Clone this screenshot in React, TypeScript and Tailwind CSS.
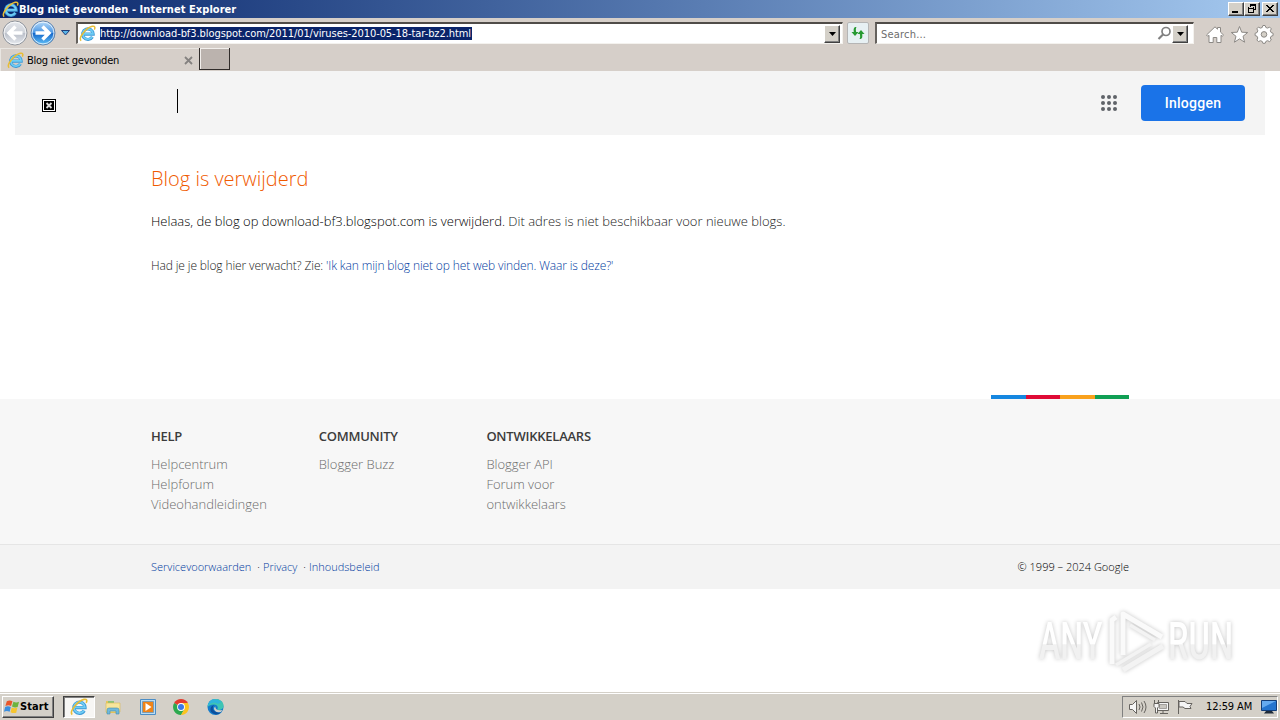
import type { ReactNode } from "react";
import clsx from "clsx";

const TAHOMA = "font-['DejaVu_Sans_Condensed','DejaVu_Sans',sans-serif] [font-stretch:condensed]";
const OPEN_SANS = "font-['Open_Sans',sans-serif]";

function IeIcon({ size = 17 }: { size?: number }) {
  return (
    <svg width={size} height={size} viewBox="0 0 18 18" fill="none" className="shrink-0">
      <path d="M14.200 12.600A5.600 5.600 0 1 1 15 9.600H5" stroke="#3f9ad6" strokeWidth="3.300" />
      <path d="M14 12.400A5.400 5.400 0 1 1 14.800 9.400H5" stroke="#6fcdf5" strokeWidth="1.900" />
      <path d="M2.200 16.600C-1 13.500 7.500 3 14 1.400c3-.6 3.300 1.300 2.200 3.400" stroke="#e8bd35" strokeWidth="1.600" />
    </svg>
  );
}

function NavCircle({ back }: { back?: boolean }) {
  return (
    <svg width="26" height="26" viewBox="0 0 26 26" className="shrink-0">
      <defs>
        <linearGradient id={back ? "nav-back" : "nav-fwd"} x1="0" y1="0" x2="0" y2="1">
          <stop offset="0" stopColor={back ? "#e4e7ec" : "#b9dcfa"} />
          <stop offset="0.48" stopColor={back ? "#cfd3da" : "#4c97e4"} />
          <stop offset="0.5" stopColor={back ? "#b9bec8" : "#1264c8"} />
          <stop offset="1" stopColor={back ? "#e8ebf0" : "#64c4fa"} />
        </linearGradient>
      </defs>
      <circle cx="13" cy="13" r="12" fill={back ? "url(#nav-back)" : "url(#nav-fwd)"} stroke={back ? "#8f949c" : "#6886ab"} />
      <circle cx="13" cy="13" r="10.9" fill="none" stroke="#fff" strokeOpacity="0.75" />
      <path
        d={back ? "M20.500 13H7.500M13.500 6.500L7 13l6.500 6.500" : "M5.500 13h13M12.500 6.500L19 13l-6.500 6.500"}
        fill="none"
        stroke="#fff"
        strokeWidth="3.500"
      />
    </svg>
  );
}

function DropButton() {
  return (
    <div className="flex h-[18px] w-4 shrink-0 items-center justify-center border border-t-white border-r-[#404040] border-b-[#404040] border-l-white bg-[#d4d0c8] shadow-[inset_-1px_-1px_#808080]">
      <svg width="7" height="4" viewBox="0 0 7 4">
        <path d="M0 0h7L3.5 4z" fill="#000" />
      </svg>
    </div>
  );
}

function WindowButton({ children, className }: { children: ReactNode; className?: string }) {
  return (
    <div
      className={clsx(
        "h-[14px] w-4 border border-t-white border-r-[#404040] border-b-[#404040] border-l-white bg-[#d4d0c8] shadow-[inset_-1px_-1px_#808080]",
        className,
      )}
    >
      <svg width="14" height="12" viewBox="0 0 14 12" fill="none" stroke="#000" shapeRendering="crispEdges">
        {children}
      </svg>
    </div>
  );
}

function TitleBar() {
  return (
    <div className="flex h-[18px] items-center bg-linear-to-r from-[#0a246a] to-[#a6caf0] pr-0.5 pl-0.5">
      <IeIcon />
      <span className={`${TAHOMA} mt-px text-[11px] leading-[18px] font-bold tracking-[0.05px] text-white`}>
        Blog niet gevonden - Internet Explorer
      </span>
      <div className="ml-auto flex">
        <WindowButton>
          <path d="M3 9h6" strokeWidth="2" />
        </WindowButton>
        <WindowButton>
          <path d="M5 2h6M5 1.5h6M5.500 1v3M10.500 1v6M8 6.500h3M3 5h6M3.500 4v6M8.500 4v6M3 9.500h6" />
        </WindowButton>
        <WindowButton className="ml-0.5">
          <path d="M3 2l7 7M4 2l7 7M10 2L3 9M11 2L4 9" shapeRendering="auto" />
        </WindowButton>
      </div>
    </div>
  );
}

function AddressRow() {
  return (
    <div className="flex h-[30px] items-center pl-0.5">
      <NavCircle back />
      <div className="ml-0.5">
        <NavCircle />
      </div>
      <svg width="9" height="6" viewBox="0 0 9 6" className="ml-[5px]">
        <path d="M.5.5h8L4.500 5z" fill="#58b4e8" stroke="#1d3c78" />
      </svg>
      <div className="ml-[6px] flex h-[22px] w-[767px] items-center border-t-2 border-r border-b border-l-2 border-t-[#504c48] border-r-[#f4f2ee] border-b-[#f4f2ee] border-l-[#66625e] bg-white pr-[2px] pl-px">
        <IeIcon />
        <span className={`${TAHOMA} ml-1 h-[13px] w-[372px] bg-[#0a246a] text-[11px] leading-[14px] tracking-[-0.07px] whitespace-nowrap text-white`}>
          http://download-bf3.blogspot.com/2011/01/viruses-2010-05-18-tar-bz2.html
        </span>
        <div className="ml-auto">
          <DropButton />
        </div>
      </div>
      <div className="ml-1 flex h-[22px] w-[22px] items-center justify-center rounded-[2px] border border-[#b5b5b5] bg-[#e7f0f3]">
        <svg width="16" height="14" viewBox="0 0 16 14" fill="#279a32">
          <path d="M6.500 1C3.500 1 3.500 3 3.800 6H1.500l3.500 4 3.500-4H6.200c-.5-2-.5-4 .3-5z" />
          <path d="M9.500 13c3 0 3-2 2.700-5h2.300L11 4 7.500 8h2.300c.5 2 .5 4-.3 5z" />
        </svg>
      </div>
      <div className="ml-1.5 flex h-[22px] w-[319px] items-center border-t-2 border-r border-b border-l-2 border-t-[#504c48] border-r-[#f4f2ee] border-b-[#f4f2ee] border-l-[#66625e] bg-white pr-[5px] pl-1">
        <span className={`${TAHOMA} mt-[3px] text-[11px] tracking-[0.2px] text-[#6d6d6d]`}>Search...</span>
        <svg width="15" height="15" viewBox="0 0 15 15" fill="none" stroke="#808080" className="ml-auto">
          <circle cx="9" cy="5.500" r="4" strokeWidth="1.700" />
          <path d="M6 8.500L1.500 13" strokeWidth="2.200" />
        </svg>
        <DropButton />
      </div>
      <svg width="72" height="20" viewBox="0 0 72 20" fill="#fff" stroke="#8c8985" className="mt-1 ml-[11px]">
        <path d="M1.500 10L10 1.800l2.500 2.400V2.500h3v4.600l3 2.900-1.300 1.300L16 10.300V17.500h-4.200v-5h-3.600v5H4v-7.200l-1.200 1z" />
        <path d="M34.500 1.500l2.200 5.700 6 .3-4.700 3.800 1.600 5.900-5.100-3.300-5.100 3.300 1.600-5.900-4.700-3.800 6-.3z" />
        <path d="M57.500 2l.8 2 1.700.6 2-1 1.700 1.700-1 2 .8 1.700 2 .8v2.200l-2 .8-.8 1.700 1 2-1.700 1.600-2-.9-1.700.7-.8 1.900h-2.200l-.7-1.900-1.800-.7-2 .9-1.500-1.600.9-2-.7-1.700-2-.8V9.800l2-.8.7-1.700-.9-2 1.500-1.700 2 1 1.800-.6.7-2z" transform="translate(2.600 -1.500)" />
        <circle cx="59" cy="9.400" r="2.800" fill="#d4d0c8" />
      </svg>
    </div>
  );
}

function TabRow() {
  return (
    <div className="flex h-[23px]">
      <div className="flex h-[23px] w-[199px] items-center border-t border-l border-[#e9e6e2] pr-1.5 pl-1.5">
        <IeIcon />
        <span className={`${TAHOMA} mt-0.5 ml-[3px] text-[11px] tracking-[-0.24px] text-black`}>Blog niet gevonden</span>
        <svg width="9" height="9" viewBox="0 0 9 9" stroke="#858280" strokeWidth="1.800" className="ml-auto">
          <path d="M1 1l7 7M8 1L1 8" />
        </svg>
      </div>
      <div className="h-[22px] w-[31px] border-r border-b border-l border-[#302c2a] bg-[#bbb3ae] shadow-[inset_1px_1px_#f2efec]" />
    </div>
  );
}

function PageHeader() {
  return (
    <header className="mx-[15px] flex h-16 items-center bg-[#f4f4f4] pr-5 pl-[27px]">
      <svg width="14" height="13" viewBox="0 0 14 13" className="mt-1" shapeRendering="crispEdges">
        <path d="M0 0h14v13H0z" fill="#000" />
        <path d="M1 1h12v11H1z" fill="#fff" />
        <path d="M2 2h10v9H2z" fill="#000" />
        <path d="M4.500 4l5 5M9.500 4l-5 5" stroke="#ddd" strokeWidth="1.800" shapeRendering="auto" />
      </svg>
      <div className="mb-1 ml-[121px] h-6 w-px bg-black" />
      <svg width="18" height="18" viewBox="0 0 18 18" fill="#5f6368" className="ml-auto">
        {[3, 9, 15].map((y) => [3, 9, 15].map((x) => <circle key={`${x}-${y}`} cx={x} cy={y} r="2" />))}
      </svg>
      <button className="ml-[23px] h-9 w-[104px] rounded-[4px] bg-[#1a73e8] font-['Roboto',sans-serif] text-sm font-medium tracking-[0.25px] text-white">
        Inloggen
      </button>
    </header>
  );
}

const footerColumns = [
  { title: "HELP", links: ["Helpcentrum", "Helpforum", "Videohandleidingen"] },
  { title: "COMMUNITY", links: ["Blogger Buzz"] },
  { title: "ONTWIKKELAARS", links: ["Blogger API", "Forum voor ontwikkelaars"] },
];

const brandStripes = ["bg-[#1587e0]", "bg-[#df0b36]", "bg-[#f9a11c]", "bg-[#109f54]"];

function PageFooter() {
  return (
    <footer className={OPEN_SANS}>
      <div className="mx-[151px] flex h-1 justify-end">
        {brandStripes.map((color) => (
          <div key={color} className={clsx("h-1 w-[34.500px]", color)} />
        ))}
      </div>
      <div className="flex h-[146px] border-b border-[#e5e5e5] bg-[#f7f7f7] pt-[27px] pl-[151px]">
        {footerColumns.map((col) => (
          <div key={col.title} className="w-[167.700px] pr-10">
            <h3 className="text-[13px] leading-5 font-semibold tracking-[-0.24px] text-[#3c3c3c]">{col.title}</h3>
            <ul className="mt-2 text-[13px] leading-5 font-light text-[#6c6c6c]">
              {col.links.map((link) => (
                <li key={link}>{link}</li>
              ))}
            </ul>
          </div>
        ))}
      </div>
      <div className="flex h-11 items-center justify-between bg-[#f3f3f3] px-[151px] text-[11px] font-light">
        <div className="flex text-[#003aa0]">
          <span>Servicevoorwaarden</span>
          <span className="mr-[3px] ml-1.5 text-black">·</span>
          <span>Privacy</span>
          <span className="mr-[3px] ml-1.5 text-black">·</span>
          <span>Inhoudsbeleid</span>
        </div>
        <span className="text-black">© 1999 – 2024 Google</span>
      </div>
    </footer>
  );
}

function Watermark() {
  return (
    <div className="absolute right-[36px] bottom-[42px] drop-shadow-[0_0_2px_#c4c4c4]">
      <svg width="210" height="70" viewBox="0 0 210 70" fill="none" stroke="#fafafa" strokeWidth="5">
        <defs>
          <linearGradient id="mark" x1="0" y1="0" x2="0" y2="1">
            <stop offset="0.55" stopColor="#fff" />
            <stop offset="0.56" stopColor="#f1f1f1" />
          </linearGradient>
        </defs>
        <g fill="url(#mark)" stroke="none" fontFamily="Roboto, sans-serif" fontSize="51" fontWeight="500">
          <text transform="translate(5 51) scale(0.63 1)">ANY</text>
          <text transform="translate(134 51) scale(0.64 1)">RUN</text>
        </g>
        <path d="M78 56V12l4-3" />
        <path d="M89 47V6l39 23" strokeLinejoin="round" />
        <path d="M89 62l40-24" stroke="#f3f3f3" />
        <path d="M82 57l35-21M96 17l25 15" strokeWidth="3.500" stroke="#f3f3f3" />
      </svg>
    </div>
  );
}

function ExplorerIcon() {
  return (
    <svg width="18" height="18" viewBox="0 0 18 18">
      <path d="M2 3h6l1 2h6v10H2z" fill="#e8c75d" />
      <path d="M4 3h6v3H4z" fill="#8cc47a" />
      <path d="M2 5h14v9H2z" fill="#f7e59c" stroke="#d8b955" strokeWidth=".6" />
      <path d="M3 16v-4q0-2 2-2h8q2 0 2 2v4h-3v-3H6v3z" fill="#70b8dc" stroke="#458dac" strokeWidth=".6" />
    </svg>
  );
}

function MediaIcon() {
  return (
    <svg width="16" height="16" viewBox="0 0 16 16">
      <path d="M.5.5h15v15H.5z" fill="#b9ddf5" stroke="#4b8dc5" />
      <path d="M2.500 2.500h11v11h-11z" fill="#f08418" stroke="#4b8dc5" strokeWidth=".6" />
      <path d="M5.500 4v8l6-4z" fill="#fff" />
    </svg>
  );
}

function ChromeIcon() {
  return (
    <svg width="16" height="16" viewBox="0 0 16 16">
      <path d="M8 8L1.100 4A8 8 0 0 1 14.900 4z" fill="#e33b2e" />
      <path d="M8 8h0L1.100 4A8 8 0 0 0 8 16l3.500-6z" fill="#2da94f" />
      <path d="M8 8l3.500 2L8 16A8 8 0 0 0 14.900 4H8z" fill="#fcc31e" />
      <circle cx="8" cy="8" r="3.900" fill="#fff" />
      <circle cx="8" cy="8" r="3" fill="#3b78e7" />
    </svg>
  );
}

function EdgeIcon() {
  return (
    <svg width="17" height="16" viewBox="0 0 17 16">
      <circle cx="8.500" cy="8" r="8" fill="#147ccb" />
      <path d="M.6 8C1 3 5 0 9 0c5 0 8 4 7.500 7.500-.4 3-4 4-6.500 3 2-2 0-5-3-5C3.500 5.500 1 7 .6 8z" fill="#3fc5b3" />
      <path d="M4 0.900Q10-1 14.400 3L11 5Q6 1 .7 7 1.200 3 4 .9z" fill="#2fb5dc" />
      <path d="M7 6c-3 4 0 8 7 7.500Q9 17.500 4 13 2 8 7 6z" fill="#0c4f9d" />
      <path d="M8.300 7.500Q8 12 15.500 11l-1.700 2Q7 14 7 9z" fill="#d4d0c8" />
    </svg>
  );
}

function StartFlag() {
  return (
    <svg width="16" height="16" viewBox="0 0 17 16">
      <path d="M3 2q3-2 6 0L7.500 7Q5 5.500 1.500 7z" fill="#e9562a" />
      <path d="M10 2.500q3 1.500 6 0L14.500 8q-3 1-6-.5z" fill="#6db33f" />
      <path d="M1.200 8q3-1.500 6 0L6 13q-3-1.500-6 0z" fill="#3b8ede" />
      <path d="M8.200 8.500q3 1.500 6 0L13 14q-3 1-6-.5z" fill="#f6c52f" />
    </svg>
  );
}

function Taskbar() {
  return (
    <div className="flex h-7 items-center border-t border-[#d4d0c8] bg-[#d4d0c8] pr-0.5 pl-0.5 shadow-[inset_0_1px_#fff]">
      <div className="flex h-[22px] w-[52px] items-center border border-t-white border-r-[#404040] border-b-[#404040] border-l-white pl-px shadow-[inset_-1px_-1px_#808080]">
        <StartFlag />
        <span className={`${TAHOMA} mt-0.5 text-[11px] font-bold tracking-[0.1px] text-black`}>Start</span>
      </div>
      <div className="ml-[9px] flex h-[22px] w-8 items-center justify-center border border-t-[#404040] border-r-white border-b-white border-l-[#404040] bg-[#f7f6f4] shadow-[inset_1px_1px_#808080]">
        <IeIcon size={18} />
      </div>
      <div className="ml-[9px] flex items-center gap-[17.500px]">
        <ExplorerIcon />
        <MediaIcon />
        <ChromeIcon />
        <EdgeIcon />
      </div>
      <div className="ml-auto flex h-[22px] w-[156px] items-center border border-t-[#808080] border-r-white border-b-white border-l-[#808080] pl-1.5">
        <svg width="66" height="18" viewBox="0 0 66 18" fill="#f5f5f5" stroke="#66635f">
          <path d="M.5 6.500h3l4-4v13l-4-4h-3z" />
          <path d="M10 6q2 3 0 6M12.500 4.500q3 4.500 0 9M15 3q4 6 0 12" fill="none" />
          <path d="M28.500 4.500h11v8h-11zM31 15.500h8M34 13v2" />
          <path d="M30.500 6.500h7v4h-7z" fill="#c9c6c0" strokeWidth=".5" />
          <path d="M25.500 2v3M29.500 2v3M25 5.500h5v3l-1.500 1.500v5h-2V10L25 8.500z" />
          <path d="M49.500 2v14M50 3.500h6l2 2h5l-2 3 1 2h-6l-2-1.500h-4z" />
        </svg>
        <span className={`${TAHOMA} mt-0.5 ml-[11px] text-[11px] tracking-[-0.1px] whitespace-nowrap text-black`}>12:59 AM</span>
        <svg width="16" height="14" viewBox="0 0 16 14" className="ml-auto">
          <path d="M.5.500h15v10H.5z" fill="#2374cf" stroke="#123d78" />
          <path d="M1 1h14L1 8z" fill="#64aaf0" />
          <path d="M5 11h6l2 2.500H3z" fill="#202c3a" />
        </svg>
      </div>
    </div>
  );
}

export default function App() {
  return (
    <div className="relative flex h-[720px] w-[1280px] flex-col overflow-hidden bg-white">
      <div className="h-[71px] shrink-0 bg-[#d6cfc9]">
        <TitleBar />
        <AddressRow />
        <TabRow />
      </div>

      <main className="flex-1">
        <PageHeader />
        <section className={`${OPEN_SANS} h-[260px] px-[151px] pt-[30px] font-light text-[#222]`}>
          <h1 className="text-xl leading-7 text-[#f05a00]">Blog is verwijderd</h1>
          <p className="mt-[18px] text-[13px] leading-5">
            <span className="text-black">Helaas, de blog op download-bf3.blogspot.com is verwijderd.</span> Dit adres is niet
            beschikbaar voor nieuwe blogs.
          </p>
          <p className="mt-[25px] text-xs leading-5 tracking-[-0.125px]">
            Had je je blog hier verwacht? Zie:{" "}
            <a className="text-[#003aa0]">'Ik kan mijn blog niet op het web vinden. Waar is deze?'</a>
          </p>
        </section>
        <PageFooter />
      </main>

      <Taskbar />
      <Watermark />
    </div>
  );
}
